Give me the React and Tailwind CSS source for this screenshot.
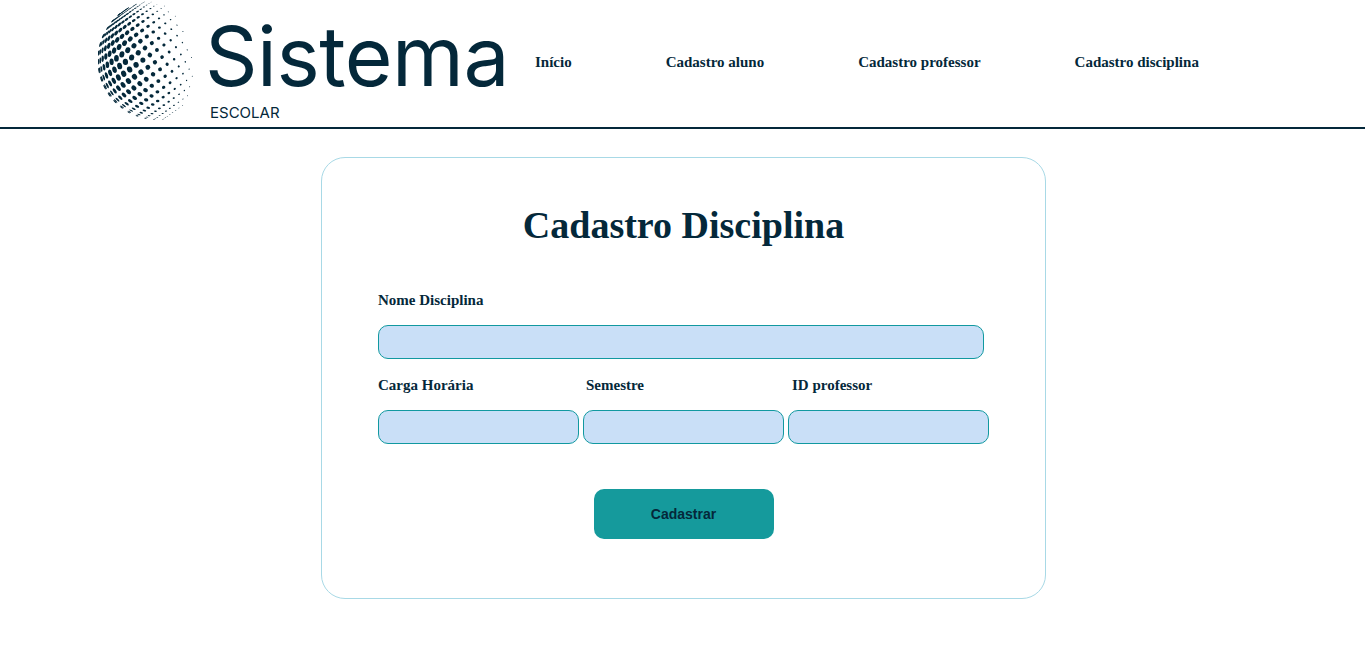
import React from 'react';

const serif = 'font-["Liberation_Serif",serif]';

// dotted globe: lat/long grid on a sphere, dot size follows the light
function Globe() {
    const dots = [];
    const R = 60;
    const tilt = -0.62;
    const lx = -0.78, ly = 0.12, lz = 0.62;
    for (let lat = -84; lat <= 84; lat += 8.4) {
        const la = (lat * Math.PI) / 180;
        for (let lon = -180; lon < 180; lon += 8.4) {
            const lo = (lon * Math.PI) / 180;
            const x0 = Math.cos(la) * Math.sin(lo);
            const y0 = Math.sin(la);
            const z = Math.cos(la) * Math.cos(lo);
            if (z <= 0.02) continue;
            const x = x0 * Math.cos(tilt) - y0 * Math.sin(tilt);
            const y = x0 * Math.sin(tilt) + y0 * Math.cos(tilt);
            const lit = x * lx + y * ly + z * lz;
            if (lit < 0.06) continue;
            const r = 0.45 + 2.9 * Math.pow(lit, 1.3);
            const squash = Math.max(0.25, z);
            const angle = (Math.atan2(y, x) * 180) / Math.PI;
            const cx = 60 + x * R;
            const cy = 60 + y * R;
            dots.push(
                <ellipse key={`${lat}-${lon}`} cx={cx} cy={cy} rx={r * squash} ry={r}
                    transform={`rotate(${angle} ${cx} ${cy})`} fill="#04283a" />
            );
        }
    }
    return (
        <svg width="100" height="122" viewBox="0 0 100 122" className="shrink-0">
            {dots}
        </svg>
    );
}

function Field({ label, className }) {
    return (
        <div className={className}>
            <label className={`block text-[15px] leading-[18px] font-bold text-[#04283a] ${serif}`}>{label}</label>
            <input className="mt-4 block h-[34px] w-full rounded-[10px] border border-[#1199a0] bg-[#c9dff7] outline-none" />
        </div>
    );
}

export default function App() {
    const links = ['Início', 'Cadastro aluno', 'Cadastro professor', 'Cadastro disciplina'];

    return (
        <div className="min-h-[645px] bg-white">
            <header className="flex h-[129px] items-start border-b-2 border-[#04283a] pl-[98px]">
                <Globe />
                <div className="ml-[7px] flex w-[300px] shrink-0 flex-col">
                    <span className='mt-[9px] text-[82px] leading-[96px] font-normal tracking-[-0.5px] text-[#04283a] font-["Inter",sans-serif]'>Sistema</span>
                    <span className='ml-[5px] mt-[-1px] text-[15px] leading-[18px] text-[#04283a] font-["Inter",sans-serif]'>ESCOLAR</span>
                </div>
                <nav className="ml-[30px] mt-[53px] flex gap-[94px]">
                    {links.map((l) => (
                        <a key={l} className={`text-[15px] leading-[18px] font-bold whitespace-nowrap text-[#04283a] ${serif}`}>{l}</a>
                    ))}
                </nav>
            </header>

            <main className="flex justify-center pt-7 pl-0.5">
                <div className="h-[442px] w-[725px] rounded-3xl border border-[#a8d9e6] px-14 pt-[44px]">
                    <h1 className={`text-center text-[38px] leading-[46px] font-bold text-[#04283a] ${serif}`}>Cadastro Disciplina</h1>
                    <Field label="Nome Disciplina" className="mt-[43px] w-[606px]" />
                    <div className="mt-[17px] flex gap-1">
                        <Field label="Carga Horária" className="w-[201px]" />
                        <Field label="Semestre" className="w-[201px] [&>label]:pl-[3px]" />
                        <Field label="ID professor" className="w-[201px] [&>label]:pl-[4px]" />
                    </div>
                    <div className="mt-[45px] flex justify-center">
                        <button className='h-[50px] w-[180px] rounded-[10px] bg-[#159a9c] text-sm font-bold text-[#04283a] font-["Liberation_Sans",sans-serif]'>Cadastrar</button>
                    </div>
                </div>
            </main>
        </div>
    );
}
